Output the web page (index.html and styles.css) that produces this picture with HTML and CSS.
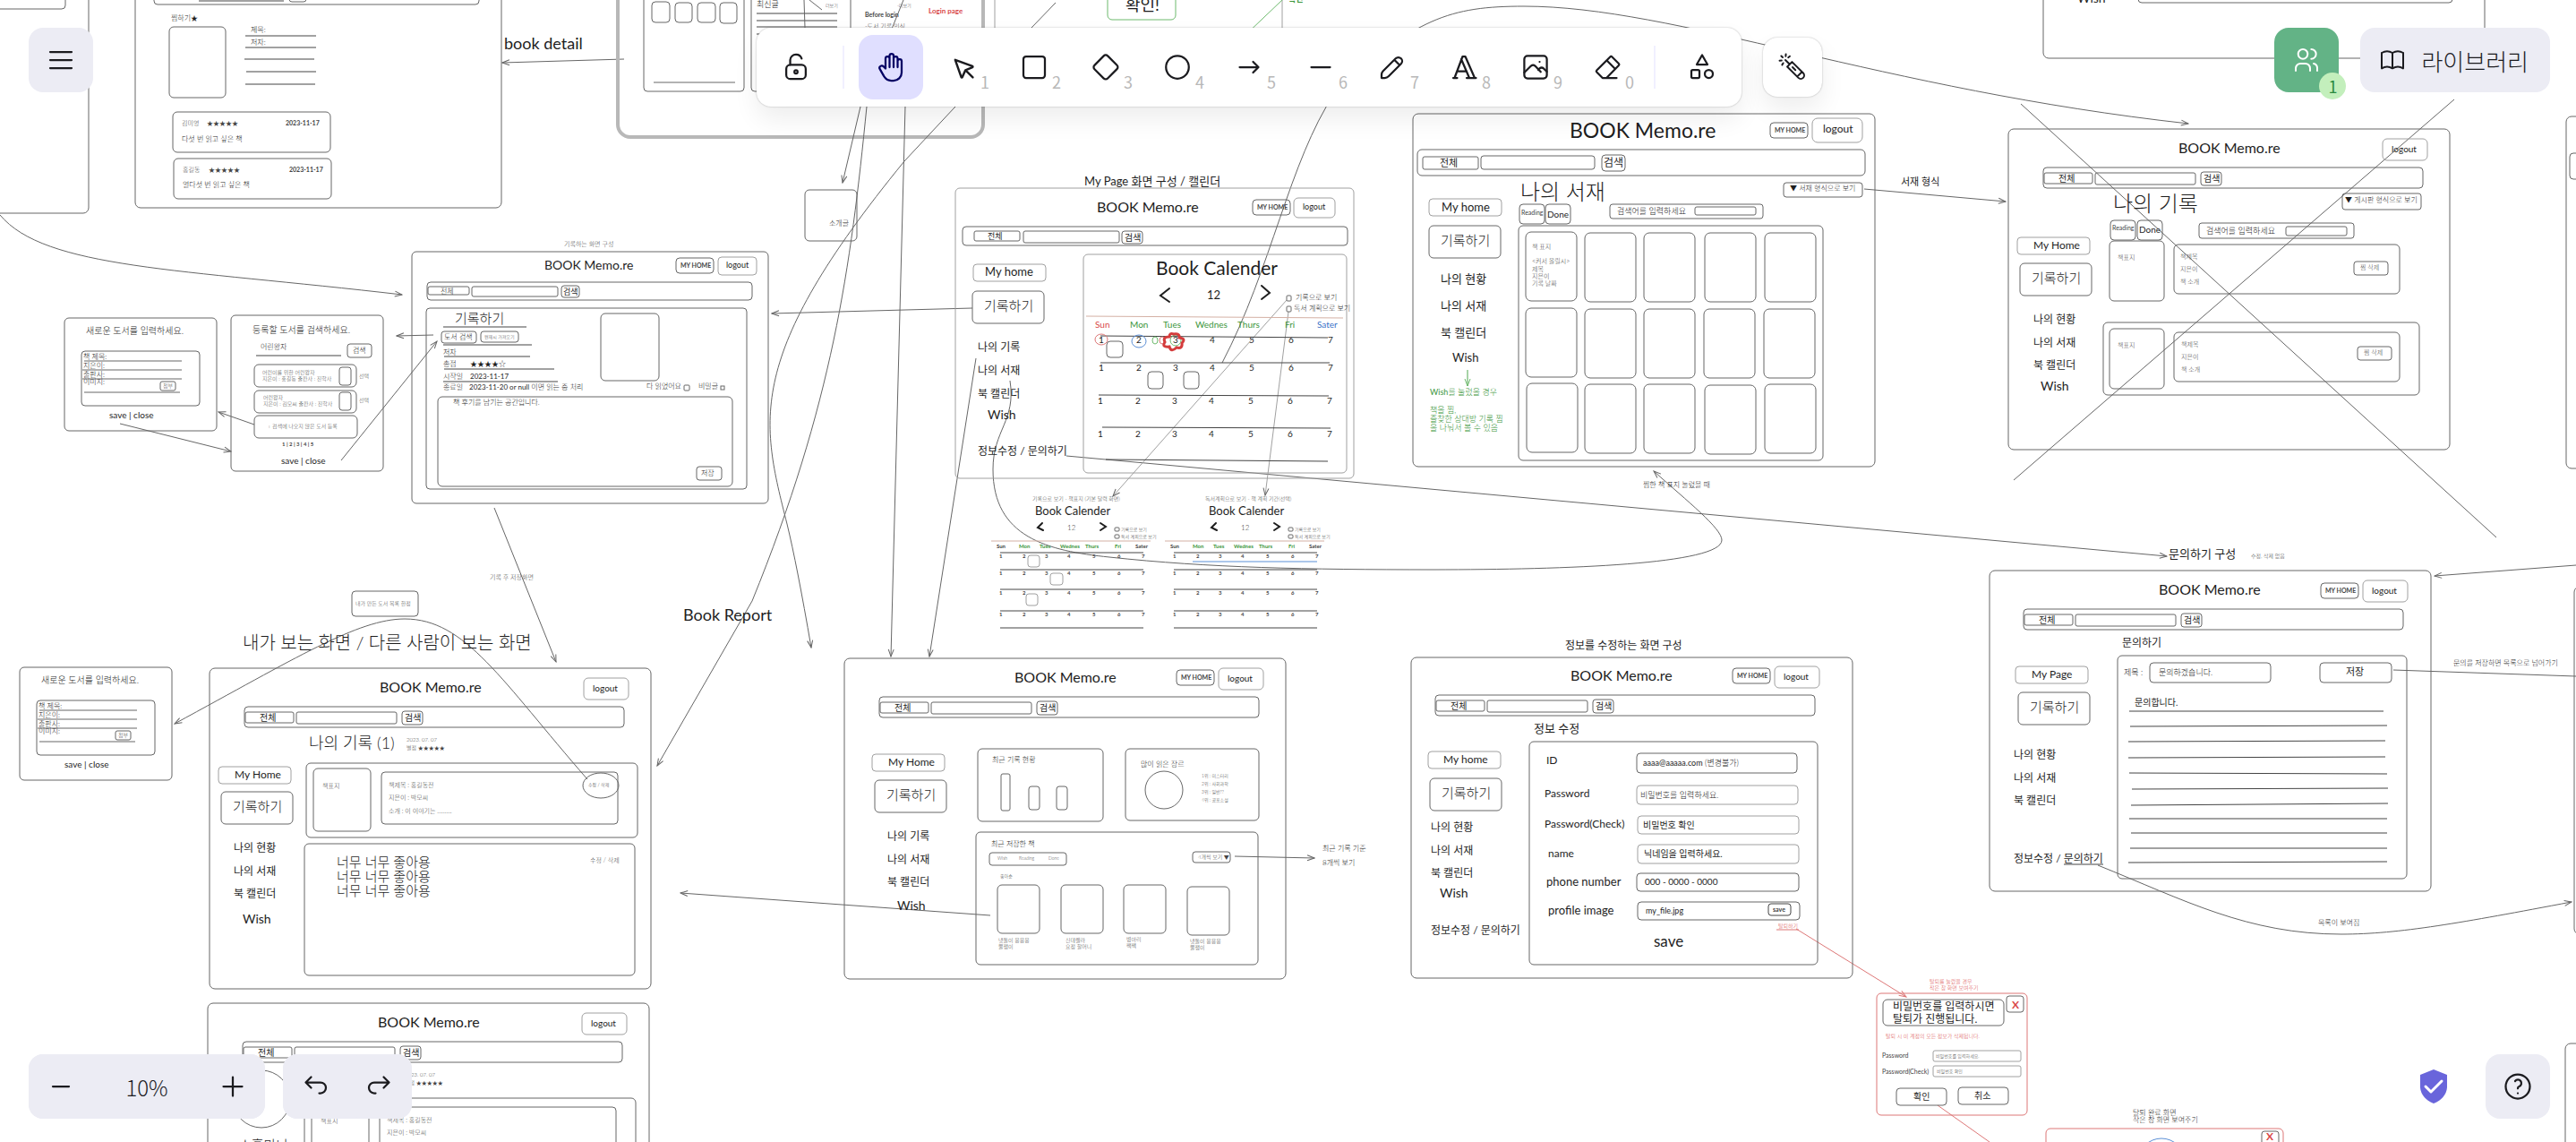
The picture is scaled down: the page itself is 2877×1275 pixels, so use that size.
FILE: index.html
```html
<!DOCTYPE html>
<html lang="ko">
<head>
<meta charset="utf-8">
<title>BOOK Memo.re</title>
<link rel="stylesheet" href="styles.css">
</head>
<body>
<svg class="canvas" aria-label="BOOK Memo.re wireframe">
  <defs>
    <marker id="tip" class="tip" viewBox="0 0 10 8" markerWidth="10" markerHeight="8" refX="9" refY="4" orient="auto" markerUnits="userSpaceOnUse"><path d="M1 1 9 4 1 7"/></marker>
    <marker id="tip-red" class="tip red" viewBox="0 0 10 8" markerWidth="10" markerHeight="8" refX="9" refY="4" orient="auto" markerUnits="userSpaceOnUse"><path d="M1 1 9 4 1 7"/></marker>
    <marker id="tip-green" class="tip green" viewBox="0 0 10 8" markerWidth="10" markerHeight="8" refX="9" refY="4" orient="auto" markerUnits="userSpaceOnUse"><path d="M1 1 9 4 1 7"/></marker>

    <!-- frame header: title, logout and search bar -->
    <g id="head">
      <text class="s16" x="190" y="27">BOOK Memo.re</text>
      <rect class="soft" x="418" y="11" width="50" height="24" rx="5"/><text class="s10" x="428" y="26">logout</text>
      <rect x="39" y="43" width="424" height="23" rx="4"/>
      <rect x="40" y="49" width="54" height="12" rx="2"/><text class="s10" x="56" y="59">전체</text>
      <rect x="97" y="49" width="112" height="13" rx="2"/>
      <rect x="215" y="48" width="23" height="15" rx="3"/><text class="s10" x="218" y="59">검색</text>
    </g>
    <g id="myhome"><rect width="42" height="17" rx="4"/><text class="s7 b" x="5" y="11">MY HOME</text></g>
    <g id="frame"><rect width="493" height="358" rx="6"/></g>
    <g id="write"><rect width="80" height="36" rx="5"/><text class="s15" x="13" y="22">기록하기</text></g>
    <g id="tab"><rect class="soft" width="81" height="19" rx="4"/></g>

    <!-- one saved record -->
    <g id="record">
      <use href="#frame"/><use href="#head"/>
      <text class="s6" x="220" y="82">2023. 07. 07</text>
      <text class="s6" x="220" y="91">별점 ★★★★★</text>
      <rect x="108" y="106" width="370" height="83" rx="5"/>
      <rect x="116" y="112" width="64" height="70" rx="5"/><text class="s7" x="126" y="134">책표지</text>
      <rect x="192" y="116" width="264" height="58" rx="4"/>
      <text class="s7" x="200" y="133">책제목 : 홍길동전</text>
      <text class="s7" x="200" y="147">지은이 : 박모씨</text>
      <text class="s7" x="200" y="162">소개 : 이 이야기는 ..........</text>
      <rect x="106" y="196" width="369" height="147" rx="5"/>
    </g>

    <!-- new book dialog -->
    <g id="newbook">
      <rect width="170" height="126" rx="5"/>
      <text class="s10 light" x="24" y="18">새로운 도서를 입력하세요.</text>
      <rect x="19" y="37" width="132" height="61" rx="4"/>
      <g class="s8"><text x="21" y="46">책 제목:</text><text x="21" y="56">지은이:</text><text x="21" y="66">출판사:</text><text x="21" y="74">이미지:</text></g>
      <path d="M22 48h109M20 58h111M20 68h111M22 83h107"/>
      <rect x="107" y="71" width="17" height="10" rx="2"/><text class="s6" x="110" y="78">첨부</text>
      <text class="s10" x="50" y="112">save | close</text>
    </g>

    <!-- small calendar -->
    <g id="minical">
      <text class="s13" x="49" y="23">Book Calender</text>
      <path class="bold" d="M57 32 52 37 58 40M122 32 128 36 122 40"/>
      <text class="s8" x="85" y="40">12</text>
      <rect x="138" y="37" width="5" height="4" rx="1"/><rect x="138" y="45" width="5" height="4" rx="1"/>
      <text class="s5" x="145" y="41">기록으로 보기</text><text class="s5" x="145" y="49">독서 계획으로 보기</text>
      <path class="brown" d="M0 52H178"/>
      <g class="s6 b">
        <text class="tr" x="6" y="60">Sun</text>
        <g class="tg"><text x="31" y="60">Mon</text><text x="54" y="60">Tues</text><text x="77" y="60">Wednes</text><text x="105" y="60">Thurs</text><text x="138" y="60">Fri</text></g>
        <text class="tb" x="161" y="60">Sater</text>
        <text y="71" x="9 35 60 85 113 141 168">1234567</text>
        <text y="90" x="9 35 60 85 113 141 168">1234567</text>
        <text y="112" x="9 35 60 85 113 141 168">1234567</text>
        <text y="136" x="9 35 60 85 113 141 168">1234567</text>
      </g>
      <path class="dark" d="M10 65H170M10 84H170M10 106H170M10 130H170M10 149H170"/>
    </g>
  </defs>

  <!-- top left frames -->
  <rect x="-50" y="-50" width="149" height="288" rx="6"/><rect x="-50" y="-50" width="123" height="60" rx="4"/>
  <rect x="151" y="-50" width="409" height="282" rx="6"/>
  <rect x="172" y="-20" width="363" height="25" rx="4"/><path class="dark" d="M222 1H317"/><rect x="323" y="-10" width="19" height="12" rx="3"/>
  <text class="s8" x="191" y="23">찜하기★</text>
  <rect x="189" y="30" width="63" height="79" rx="5"/>
  <text class="s8" x="280" y="36">제목:</text><text class="s8" x="280" y="50">저자:</text>
  <path class="dark" d="M274 40h79M274 53h79M273 66h78M275 80h78M274 94h78"/>
  <rect x="193" y="125" width="176" height="45" rx="5"/>
  <text class="s7" x="203" y="140">김미영</text><text class="s7" x="231" y="140">★★★★★</text><text class="s7 b" x="319" y="140">2023-11-17</text>
  <text class="s8" x="203" y="158">다섯 번 읽고 싶은 책</text>
  <rect x="194" y="177" width="176" height="45" rx="5"/>
  <text class="s7" x="204" y="192">홍길동</text><text class="s7" x="233" y="192">★★★★★</text><text class="s7 b" x="323" y="192">2023-11-17</text>
  <text class="s8" x="204" y="209">열다섯 번 읽고 싶은 책</text>
  <text class="s18" x="563" y="55">book detail</text>
  <path class="arrow" d="M697 66 561 70"/>

  <rect class="thick" x="690" y="-50" width="408" height="203" rx="14"/>
  <rect x="719" y="-20" width="112" height="122" rx="4"/>
  <rect x="728" y="2" width="20" height="23" rx="4"/><rect x="754" y="3" width="19" height="22" rx="4"/><rect x="779" y="3" width="20" height="22" rx="4"/><rect x="804" y="3" width="19" height="23" rx="4"/>
  <path d="M730 92H821"/>
  <rect x="839" y="-20" width="111" height="122" rx="4"/>
  <text class="s9 light" x="845" y="8">최신글</text>
  <path class="dark" d="M845 15h90M845 23h90M845 30h90M845 38h90"/>
  <path d="M898 0 899 31M904 0 918 11"/><text class="s5" x="922" y="8">더보기</text>
  <text class="s5" x="1002" y="8">-더보기</text><text class="s7 b" x="966" y="19">Before login</text><text class="s7" x="966" y="32">-도서 기록 인식</text>
  <text class="s8 b tr" x="1037" y="15">Login page</text>
  <path class="soft" d="M1111 0V40M1432 0V40"/>
  <rect class="green" x="1237" y="-10" width="76" height="32" rx="5"/><text class="s18" x="1257" y="12">확인!</text>
  <path class="green" d="M1432 0 1390 40"/><text class="s9 b tg" x="1439" y="2">확인</text>
  <rect x="2282" y="-20" width="493" height="85" rx="6"/><rect x="2388" y="-20" width="351" height="23" rx="4"/><text class="s14" x="2320" y="3">Wish</text>

  <!-- connectors -->
  <path class="arrow" d="M0 240C50 300 200 300 449 329"/>
  <path class="arrow" d="M1009 0 961 119 941 204"/>
  <path class="arrow" d="M968 119C950 300 930 450 840 671L734 855"/>
  <path class="arrow" d="M1012 80 995 733"/>
  <path class="arrow" d="M1179 3 1067 119 1010 180C830 400 850 470 879 585Q890 630 906 723"/>
  <path class="arrow" d="M1365 405C1420 300 1440 180 1490 105C1580 20 1620 7 1702 7C1870 7 2100 100 2444 138"/>
  <path class="arrow" d="M1086 344 862 350"/>
  <path class="arrow" d="M1090 400 1038 733"/>
  <path class="arrow" d="M1191 509 2420 621"/>
  <path class="arrow" d="M1128 425C1135 470 1109 480 1109 524C1109 600 1170 615 1239 622C1350 634 1460 636 1600 636C1750 636 1923 630 1923 603C1923 590 1885 560 1847 526"/>
  <path class="arrow soft" d="M1437 335 1243 554"/><path class="arrow soft" d="M1439 348 1413 553"/>
  <path class="arrow" d="M2082 211 2240 225"/>
  <path d="M2257 116 2788 600M2741 111 2249 536"/>
  <path class="arrow" d="M284 474 244 460"/><path class="arrow" d="M134 473 258 504"/><path class="arrow" d="M381 514 488 381"/><path class="arrow" d="M484 374 443 375"/>
  <path class="arrow" d="M552 567 621 739"/>
  <path class="arrow" d="M656 870C560 760 520 691 452 691C400 691 330 735 195 808"/>
  <path class="arrow" d="M1106 1022 760 997"/><path class="arrow" d="M1379 956 1468 958"/>
  <path class="arrow" d="M2877 631 2719 643"/><path d="M2673 748 2877 755"/>
  <path class="arrow" d="M2343 966C2440 1005 2510 1043 2615 1043C2680 1043 2750 1030 2872 1007"/>
  <path class="arrow red" d="M2006 1037 2129 1113"/><path class="red soft" d="M2164 1234 2222 1275"/>
  <rect x="899" y="212" width="58" height="57" rx="5"/><text class="s8" x="926" y="252">소개글</text>

  <!-- record entry frame -->
  <text class="s7" x="630" y="275">기록하는 화면 구성</text>
  <rect x="460" y="281" width="398" height="281" rx="5"/>
  <text class="s14" x="608" y="301">BOOK Memo.re</text>
  <use href="#myhome" x="755" y="288"/>
  <rect class="soft" x="802" y="287" width="43" height="20" rx="4"/><text class="s9" x="811" y="299">logout</text>
  <rect x="477" y="315" width="363" height="20" rx="4"/><rect x="478" y="320" width="46" height="9" rx="2"/><text class="s8" x="492" y="328">전체</text>
  <rect x="527" y="320" width="96" height="11" rx="2"/><rect x="627" y="319" width="20" height="13" rx="3"/><text class="s9" x="629" y="329">검색</text>
  <rect x="476" y="344" width="358" height="202" rx="4"/>
  <text class="s15" x="508" y="361">기록하기</text>
  <path class="dark" d="M495 365h93M495 385h99M496 398h96M496 412h123M495 426h128"/>
  <rect x="493" y="370" width="39" height="13" rx="3"/><text class="s8" x="496" y="379">도서 검색</text>
  <rect x="537" y="370" width="42" height="12" rx="3"/><text class="s5" x="541" y="378">현재시 가져오기</text>
  <g class="s8">
    <text x="495" y="396">저자</text><text x="495" y="409">총점</text><text x="525" y="409">★★★★☆</text>
    <text x="495" y="423">시작일</text><text class="m" x="525" y="423">2023-11-17</text>
    <text x="495" y="435">종료일</text><text x="524" y="435"><tspan class="m">2023-11-20 or null</tspan> 이면 읽는 중 처리</text>
    <text x="722" y="434">다 읽었어요</text><text x="780" y="434">비밀글</text>
    <text x="506" y="452">책 후기를 남기는 공간입니다.</text>
  </g>
  <rect x="764" y="430" width="6" height="6" rx="1"/><rect x="805" y="431" width="4" height="4"/>
  <rect x="671" y="350" width="65" height="75" rx="5"/>
  <rect x="489" y="443" width="329" height="100" rx="5"/>
  <rect x="778" y="521" width="28" height="15" rx="3"/><text class="s8" x="783" y="531">저장</text>

  <!-- dialogs left -->
  <use href="#newbook" x="72" y="355"/><use href="#newbook" x="22" y="745"/>
  <rect x="258" y="352" width="170" height="174" rx="5"/>
  <text class="s10 light" x="282" y="372">등록할 도서를 검색하세요.</text>
  <text class="s8" x="291" y="390">어린왕자</text><path class="dark" d="M286 397h95"/>
  <rect x="388" y="384" width="27" height="15" rx="3"/><text class="s8" x="394" y="394">검색</text>
  <rect x="284" y="407" width="114" height="25" rx="5"/><rect x="379" y="410" width="13" height="20" rx="3"/>
  <rect x="284" y="436" width="114" height="25" rx="5"/><rect x="379" y="438" width="13" height="20" rx="3"/>
  <rect x="284" y="464" width="115" height="25" rx="5"/>
  <g class="s6"><text x="293" y="418">어린이를 위한 어린왕자</text><text x="293" y="425">지은이 : 홍길동 출판사 : 진학사</text><text x="401" y="422">선택</text>
  <text x="294" y="446">어린왕자</text><text x="294" y="453">지은이 : 김모씨 출판사 : 진학사</text><text x="401" y="449">선택</text>
  <text x="299" y="478">+ 검색에 나오지 않은 도서 등록</text><text class="b" x="315" y="498">1 | 2 | 3 | 4 | 5</text></g>
  <text class="s10" x="314" y="518">save | close</text>

  <!-- calendar frame -->
  <text class="s13" x="1211" y="207">My Page 화면 구성 / 캘린더</text>
  <rect class="soft" x="1067" y="210" width="445" height="324" rx="5"/>
  <text class="s16" x="1225" y="237">BOOK Memo.re</text>
  <use href="#myhome" x="1399" y="223"/>
  <rect class="soft" x="1445" y="221" width="46" height="22" rx="5"/><text class="s9" x="1455" y="234">logout</text>
  <rect x="1075" y="253" width="430" height="21" rx="4"/><rect x="1088" y="258" width="51" height="11" rx="2"/><text class="s9" x="1103" y="267">전체</text>
  <rect x="1143" y="258" width="107" height="13" rx="2"/><rect x="1253" y="258" width="23" height="14" rx="3"/><text class="s10" x="1256" y="269">검색</text>
  <use href="#tab" x="1087" y="295"/><text class="s13" x="1100" y="308">My home</text>
  <use href="#write" x="1086" y="325"/>
  <g class="s12"><text x="1092" y="392">나의 기록</text><text x="1092" y="418">나의 서재</text><text x="1092" y="444">북 캘린더</text><text x="1092" y="508">정보수정 / 문의하기</text></g><text class="s14" x="1103" y="468">Wish</text>
  <rect class="soft" x="1210" y="284" width="294" height="244" rx="5"/>
  <text class="s21" x="1291" y="307">Book Calender</text>
  <path class="bold" d="M1306 322 1296 330 1306 337M1409 319 1418 327 1409 334"/><text class="s13" x="1348" y="334">12</text>
  <rect x="1437" y="330" width="5" height="6" rx="1"/><rect x="1437" y="342" width="5" height="6" rx="1"/>
  <text class="s8" x="1447" y="335">기록으로 보기</text><text class="s8" x="1445" y="347">독서 계획으로 보기</text>
  <path class="brown" d="M1213 353 1500 355"/>
  <g class="s10">
    <text class="tr" x="1223" y="366">Sun</text>
    <g class="tg"><text x="1262" y="366">Mon</text><text x="1299" y="366">Tues</text><text x="1335" y="366">Wednes</text><text x="1382" y="366">Thurs</text><text x="1435" y="366">Fri</text></g>
    <text class="tb" x="1471" y="366">Sater</text>
    <text y="383" x="1227 1269 1310 1351 1395 1439 1483">1234567</text>
    <text y="414" x="1227 1269 1310 1351 1395 1439 1483">1234567</text>
    <text y="451" x="1226 1268 1309 1350 1394 1438 1482">1234567</text>
    <text y="488" x="1226 1268 1309 1350 1394 1438 1482">1234567</text>
  </g>
  <path class="dark" d="M1229 375 1483 377M1229 405 1485 405M1227 441 1484 442M1231 477 1486 478M1235 513 1483 515"/>
  <rect x="1236" y="381" width="18" height="18" rx="4"/><rect x="1282" y="415" width="17" height="19" rx="4"/><rect x="1322" y="415" width="17" height="19" rx="4"/>
  <ellipse class="red" cx="1230" cy="379" rx="7" ry="6"/><ellipse class="blue" cx="1272" cy="381" rx="8" ry="7"/>
  <ellipse class="green" cx="1290" cy="380" rx="3" ry="4"/><ellipse class="red" cx="1298" cy="380" rx="3" ry="4"/><ellipse class="green" cx="1313" cy="380" rx="6" ry="6"/>
  <path class="flower" d="M1306 376Q1306 371 1311 373Q1318 372 1317 377Q1325 378 1320 383Q1321 390 1314 388Q1308 394 1306 387Q1297 388 1301 382Q1298 376 1306 376Z"/>

  <!-- small calendars -->
  <text class="s6" x="1153" y="559">기록으로 보기 - 책표지 (기본 달력 화면)</text><text class="s6" x="1346" y="559">독서계획으로 보기 - 책 계획 기간(선택)</text>
  <use href="#minical" x="1107" y="552"/><use href="#minical" x="1301" y="552"/>
  <path class="blue" d="M1332 627H1471"/>
  <g class="soft"><rect x="1148" y="620" width="13" height="13" rx="3"/><rect x="1173" y="640" width="14" height="13" rx="3"/><rect x="1146" y="663" width="13" height="13" rx="3"/></g>

  <!-- library frame -->
  <rect x="1578" y="127" width="516" height="394" rx="6"/>
  <text class="s23" x="1753" y="154">BOOK Memo.re</text>
  <use href="#myhome" x="1977" y="137"/>
  <rect class="soft" x="2024" y="132" width="56" height="27" rx="6"/><text class="s12" x="2036" y="148">logout</text>
  <rect x="1583" y="167" width="500" height="29" rx="5"/><rect x="1589" y="175" width="62" height="14" rx="2"/><text class="s11" x="1608" y="186">전체</text>
  <rect x="1654" y="174" width="127" height="15" rx="3"/><rect x="1789" y="173" width="26" height="18" rx="4"/><text class="s12" x="1791" y="186">검색</text>
  <text class="s24" x="1698" y="223">나의 서재</text>
  <rect x="1992" y="204" width="88" height="16" rx="3"/><text class="s8" x="1999" y="213">▼ 서재 형식으로 보기</text>
  <rect x="1697" y="228" width="28" height="22" rx="4"/><text class="s7 m" x="1699" y="240">Reading</text><rect x="1726" y="228" width="28" height="22" rx="4"/><text class="s10" x="1728" y="243">Done</text>
  <rect x="1798" y="228" width="171" height="16" rx="3"/><text class="s9 light" x="1806" y="239">검색어를 입력하세요</text><rect x="1893" y="231" width="68" height="9" rx="2"/>
  <rect x="1696" y="252" width="340" height="262" rx="5"/>
  <g>
    <rect x="1704" y="259" width="57" height="77" rx="6"/><rect x="1770" y="260" width="57" height="77" rx="6"/><rect x="1836" y="260" width="57" height="77" rx="6"/><rect x="1904" y="260" width="57" height="77" rx="6"/><rect x="1971" y="260" width="57" height="77" rx="6"/>
    <rect x="1704" y="344" width="57" height="77" rx="6"/><rect x="1770" y="345" width="57" height="77" rx="6"/><rect x="1836" y="345" width="57" height="77" rx="6"/><rect x="1903" y="345" width="57" height="77" rx="6"/><rect x="1970" y="345" width="57" height="77" rx="6"/>
    <rect x="1705" y="428" width="57" height="77" rx="6"/><rect x="1770" y="429" width="57" height="77" rx="6"/><rect x="1836" y="429" width="57" height="77" rx="6"/><rect x="1904" y="430" width="57" height="77" rx="6"/><rect x="1971" y="429" width="57" height="77" rx="6"/>
  </g>
  <g class="s7"><text x="1711" y="278">책 표지</text><text x="1711" y="294">&lt;커서 올릴시&gt;</text><text x="1711" y="303">제목</text><text x="1711" y="311">지은이</text><text x="1711" y="319">기록 날짜</text></g>
  <use href="#tab" x="1596" y="222"/><text class="s13" x="1610" y="236">My home</text>
  <use href="#write" x="1596" y="252"/>
  <g class="s13"><text x="1609" y="316">나의 현황</text><text x="1609" y="346">나의 서재</text><text x="1609" y="376">북 캘린더</text><text x="1622" y="404">Wish</text></g>
  <path class="arrow-green" d="M1639 413V431"/>
  <g class="s9 tg"><text class="light" x="1597" y="441"><tspan class="m">Wish</tspan>를 눌렀을 경우</text><text class="light" x="1597" y="461">책을 찜,</text><text class="light" x="1597" y="471">즐찾한 상대방 기록 찜</text><text class="light" x="1597" y="481">을 나눠서 볼 수 있음</text></g>
  <text class="s8" x="1835" y="544">찜한 책 표지 눌렀을 때</text>
  <text class="s11" x="2123" y="207">서재 형식</text>

  <!-- crossed-out list frame -->
  <use href="#frame" x="2243" y="144"/><use href="#head" x="2243" y="144"/>
  <text class="s24" x="2360" y="236">나의 기록</text>
  <rect x="2616" y="216" width="88" height="18" rx="3"/><text class="s8" x="2619" y="226">▼ 게시판 형식으로 보기</text>
  <rect x="2357" y="246" width="28" height="22" rx="4"/><text class="s7 m" x="2359" y="257">Reading</text><rect x="2387" y="246" width="28" height="22" rx="4"/><text class="s10" x="2389" y="260">Done</text>
  <rect x="2456" y="249" width="173" height="17" rx="3"/><text class="s9 light" x="2464" y="261">검색어를 입력하세요</text><rect x="2553" y="253" width="68" height="10" rx="2"/>
  <rect x="2356" y="269" width="61" height="67" rx="5"/><rect x="2428" y="273" width="252" height="55" rx="5"/><rect x="2629" y="292" width="38" height="15" rx="3"/>
  <rect x="2349" y="360" width="353" height="81" rx="5"/><rect x="2356" y="367" width="61" height="67" rx="5"/><rect x="2428" y="371" width="252" height="55" rx="5"/><rect x="2633" y="387" width="38" height="15" rx="3"/>
  <g class="s7"><text x="2365" y="290">책표지</text><text x="2435" y="289">책제목</text><text x="2435" y="303">지은이</text><text x="2435" y="317">책 소개</text><text x="2636" y="301">찜 삭제</text>
  <text x="2365" y="388">책표지</text><text x="2436" y="387">책제목</text><text x="2436" y="401">지은이</text><text x="2436" y="415">책 소개</text><text x="2640" y="396">찜 삭제</text></g>
  <use href="#tab" x="2253" y="265"/><text class="s12" x="2271" y="278">My Home</text><use href="#write" x="2256" y="294"/>
  <g class="s12"><text x="2271" y="361">나의 현황</text><text x="2271" y="387">나의 서재</text><text x="2271" y="412">북 캘린더</text></g><text class="s14" x="2279" y="436">Wish</text>

  <!-- inquiry frame -->
  <text class="s13" x="2422" y="623">문의하기 구성</text><text class="s6" x="2514" y="623">수정, 삭제 없음</text>
  <use href="#frame" x="2222" y="637"/><use href="#head" x="2221" y="637"/><use href="#myhome" x="2592" y="651"/>
  <text class="s12" x="2370" y="722">문의하기</text>
  <rect x="2365" y="732" width="323" height="249" rx="5"/>
  <text class="s9 light" x="2372" y="754">제목 :</text><rect x="2401" y="740" width="135" height="22" rx="4"/><text class="s9 light" x="2411" y="754">문의하겠습니다.</text>
  <rect x="2591" y="740" width="80" height="22" rx="4"/><text class="s11" x="2620" y="754">저장</text>
  <text class="s10" x="2384" y="788">문의합니다.</text>
  <path class="dark" d="M2378 794H2662M2379 811 2666 810M2377 828 2664 827M2377 846 2664 845M2378 863 2666 864M2381 881 2667 880M2380 899 2667 897M2378 914H2666M2380 930H2666M2379 947H2666M2377 963 2666 962"/>
  <use href="#tab" x="2251" y="744"/><text class="s12" x="2269" y="757">My Page</text><use href="#write" x="2254" y="773"/>
  <g class="s12"><text x="2249" y="847">나의 현황</text><text x="2249" y="873">나의 서재</text><text x="2249" y="898">북 캘린더</text><text x="2249" y="963">정보수정 / 문의하기</text></g>
  <path class="dark" d="M2305 965H2349"/>
  <text class="s8" x="2589" y="1033">목록이 보여짐</text><text class="s8" x="2740" y="743">문의를 저장하면 목록으로 넘어가기</text>
  <rect x="2866" y="130" width="60" height="393" rx="6"/><rect x="2870" y="171" width="60" height="29" rx="4"/><rect x="2875" y="655" width="60" height="388" rx="6"/><rect x="2865" y="1165" width="60" height="200" rx="6"/>

  <!-- dashboard frame -->
  <text class="s18" x="763" y="693">Book Report</text>
  <use href="#frame" x="943" y="735"/><use href="#head" x="943" y="735"/><use href="#myhome" x="1314" y="748"/>
  <use href="#tab" x="974" y="842"/><text class="s12" x="992" y="855">My Home</text><use href="#write" x="977" y="871"/>
  <g class="s12"><text x="991" y="938">나의 기록</text><text x="991" y="964">나의 서재</text><text x="991" y="989">북 캘린더</text></g><text class="s14" x="1002" y="1016">Wish</text>
  <rect x="1092" y="836" width="140" height="81" rx="5"/><rect x="1257" y="836" width="149" height="80" rx="5"/><rect x="1090" y="929" width="315" height="148" rx="5"/>
  <rect x="1118" y="864" width="10" height="41" rx="2"/><rect x="1149" y="878" width="12" height="26" rx="3"/><rect x="1180" y="878" width="12" height="26" rx="3"/><circle cx="1300" cy="882" r="21"/>
  <g class="s8"><text x="1108" y="851">최근 기록 현황</text><text x="1274" y="856">많이 읽은 장르</text><text x="1107" y="945">최근 저장한 책</text><text x="1477" y="950">최근 기록 기준</text><text x="1477" y="966">8개씩 보기</text></g>
  <g class="s5"><text x="1342" y="868">1위 : 미스터리</text><text x="1342" y="877">2위 : 사회과학</text><text x="1342" y="886">3위 : 일반??</text><text x="1342" y="895">4위 : 공포소설</text><text x="1114" y="960">Wish</text><text x="1138" y="960">Reading</text><text x="1171" y="960">Done</text><text x="1117" y="980">좋아순</text></g>
  <rect x="1105" y="952" width="86" height="14" rx="3"/><rect x="1332" y="951" width="42" height="12" rx="3"/><text class="s6" x="1338" y="959">4개씩 보기 ▼</text>
  <rect x="1114" y="988" width="47" height="54" rx="5"/><rect x="1185" y="988" width="47" height="54" rx="5"/><rect x="1255" y="988" width="47" height="54" rx="5"/><rect x="1326" y="990" width="47" height="54" rx="5"/>
  <g class="s6"><text x="1115" y="1052">냇돌이 용용용</text><text x="1115" y="1059">뿔쟁이</text><text x="1190" y="1052">신데렐라</text><text x="1190" y="1059">요정 할머니</text><text x="1258" y="1051">병아리</text><text x="1258" y="1058">짹짹</text><text x="1329" y="1053">냇돌이 용용용</text><text x="1329" y="1060">뿔쟁이</text></g>

  <!-- profile edit frame -->
  <text class="s12" x="1748" y="725">정보를 수정하는 화면 구성</text>
  <use href="#frame" x="1576" y="734"/><use href="#head" x="1564" y="733"/><use href="#myhome" x="1935" y="746"/>
  <text class="s13" x="1713" y="818">정보 수정</text>
  <rect x="1708" y="828" width="322" height="249" rx="5"/>
  <g class="s12"><text x="1727" y="853">ID</text><text x="1725" y="890">Password</text><text x="1725" y="924">Password(Check)</text><text x="1729" y="957">name</text></g><g class="s13"><text x="1727" y="989">phone number</text><text x="1729" y="1021">profile image</text></g>
  <rect x="1828" y="841" width="179" height="22" rx="4"/><rect class="soft" x="1828" y="877" width="180" height="21" rx="4"/><rect class="soft" x="1829" y="911" width="180" height="20" rx="4"/><rect class="soft" x="1829" y="943" width="180" height="21" rx="4"/><rect x="1828" y="975" width="181" height="20" rx="4"/><rect x="1829" y="1007" width="181" height="20" rx="4"/>
  <text class="s9 light" x="1835" y="855"><tspan class="m">aaaa@aaaaa.com</tspan> (변경불가)</text><text class="s9 light" x="1832" y="891">비밀번호를 입력하세요.</text><text class="s10" x="1835" y="925">비밀번호 확인</text><text class="s10" x="1836" y="957">닉네임을 입력하세요.</text><text class="s10" x="1837" y="988">000 - 0000 - 0000</text><text class="s9" x="1838" y="1020">my_file.jpg</text>
  <rect class="dark" x="1975" y="1009" width="25" height="13" rx="3"/><text class="s7 b" x="1980" y="1018">save</text><text class="s17" x="1847" y="1057">save</text>
  <text class="s6 tr" x="1986" y="1036">탈퇴하기</text><path class="red" d="M1984 1038H2009"/>
  <use href="#tab" x="1595" y="839"/><text class="s12" x="1612" y="852">My home</text><use href="#write" x="1597" y="869"/>
  <g class="s12"><text x="1598" y="928">나의 현황</text><text x="1598" y="954">나의 서재</text><text x="1598" y="979">북 캘린더</text><text x="1598" y="1043">정보수정 / 문의하기</text></g><text class="s14" x="1608" y="1002">Wish</text>

  <!-- leave-account dialogs -->
  <text class="s6 tr" x="2155" y="1098">탈퇴를 눌렀을 경우</text><text class="s6 tr" x="2155" y="1105">작은 창 화면 보여주기</text>
  <rect class="red" x="2096" y="1109" width="168" height="136" rx="5"/>
  <rect x="2103" y="1116" width="135" height="29" rx="5"/><text class="s12" x="2114" y="1128">비밀번호를 입력하시면</text><text class="s12" x="2114" y="1142">탈퇴가 진행됩니다.</text>
  <rect x="2241" y="1112" width="19" height="18" rx="3"/><text class="s12 b tr" x="2247" y="1126">X</text>
  <text class="s6 tr" x="2106" y="1159">탈퇴 시 이 계정의 모든 정보가 삭제됩니다.</text>
  <text class="s7 m" x="2102" y="1181">Password</text><text class="s7 m" x="2102" y="1199">Password(Check)</text>
  <rect class="soft" x="2159" y="1173" width="98" height="12" rx="2"/><rect class="soft" x="2159" y="1190" width="98" height="12" rx="2"/><text class="s5" x="2162" y="1181">비밀번호를 입력하세요.</text><text class="s5" x="2163" y="1198">비밀번호 확인</text>
  <rect x="2118" y="1215" width="56" height="19" rx="4"/><text class="s10" x="2137" y="1228">확인</text><rect x="2187" y="1214" width="56" height="19" rx="4"/><text class="s10" x="2205" y="1227">취소</text>
  <text class="s8" x="2382" y="1245">탈퇴 완료 화면</text><text class="s8" x="2382" y="1253">작은 창 화면 보여주기</text>
  <rect class="red" x="2285" y="1260" width="265" height="100" rx="5"/><rect x="2526" y="1263" width="19" height="20" rx="3"/><text class="s12 b tr" x="2531" y="1273">X</text><circle class="blue" cx="2414" cy="1297" r="26"/>

  <!-- my record frames -->
  <text class="s7" x="547" y="647">기록 후 저장화면</text>
  <rect x="393" y="660" width="74" height="28" rx="4"/><text class="s6" x="397" y="676">내가 만든 도서 목록 한정</text>
  <text class="s20 light" x="271" y="725">내가 보는 화면 / 다른 사람이 보는 화면</text>
  <use href="#record" x="234" y="746"/><use href="#record" x="232" y="1120"/>
  <text class="s18 light" x="345" y="836">나의 기록 (1)</text>
  <use href="#tab" x="244" y="856"/><text class="s12" x="262" y="869">My Home</text><use href="#write" x="247" y="884"/>
  <g class="s12"><text x="261" y="951">나의 현황</text><text x="261" y="977">나의 서재</text><text x="261" y="1002">북 캘린더</text></g><text class="s14" x="271" y="1031">Wish</text>
  <ellipse cx="671" cy="877" rx="20" ry="14"/><text class="s5" x="657" y="878">수정 / 삭제</text><text class="s7" x="659" y="963">수정 / 삭제</text>
  <g class="s15"><text x="376" y="968">너무 너무 좋아용</text><text x="376" y="984">너무 너무 좋아용</text><text x="376" y="1000">너무 너무 좋아용</text></g>
  <circle cx="292" cy="1227" r="32"/><text class="s15" x="267" y="1284">소홍만나</text>
</svg>

<div class="ui">
  <header class="top">
    <div><button class="btn" aria-label="menu"><svg class="icon" viewBox="0 0 24 24"><path d="M4 6h16M4 12h16M4 18h16"/></svg></button></div>
    <div class="center">
      <div class="toolbar" role="toolbar" aria-label="tools">
        <button class="tool" aria-label="lock"><svg class="icon" viewBox="0 0 20 20"><path d="M13.542 8.542H6.458a2.500 2.500 0 0 0-2.500 2.500v3.750a2.500 2.500 0 0 0 2.500 2.500h7.084a2.500 2.500 0 0 0 2.500-2.500v-3.750a2.500 2.500 0 0 0-2.500-2.500Z"/><circle cx="10" cy="12.900" r="1"/><path d="M6.400 8.500V5.600C6.400 3.700 8 2.200 10 2.200c1.700 0 3 1 3.500 2.500"/></svg></button>
        <span class="sep"></span>
        <button class="tool on" aria-label="hand"><svg class="icon" viewBox="0 0 24 24"><path d="M8 13V5.500a1.500 1.500 0 0 1 3 0V12M11 5.500v-2a1.500 1.500 0 1 1 3 0V12M14 5.500a1.500 1.500 0 0 1 3 0V12M17 7.500a1.500 1.500 0 0 1 3 0V16a6 6 0 0 1-6 6h-2 .208a6 6 0 0 1-5.012-2.700A69.740 69.740 0 0 1 7 19c-.312-.479-1.407-2.388-3.286-5.728a1.500 1.500 0 0 1 .536-2.022 1.867 1.867 0 0 1 2.280.280L8 13"/></svg></button>
        <button class="tool" aria-label="select"><svg class="icon" viewBox="0 0 22 22"><path d="m6 6 4.153 11.793a.365.365 0 0 0 .331.207.366.366 0 0 0 .332-.207L13 13l4.787-1.994a.355.355 0 0 0 .213-.323.355.355 0 0 0-.213-.323ZM13.500 13.500 18 18"/></svg><span>1</span></button>
        <button class="tool" aria-label="rectangle"><svg class="icon" viewBox="0 0 24 24"><rect x="4" y="4" width="16" height="16" rx="2"/></svg><span>2</span></button>
        <button class="tool" aria-label="diamond"><svg class="icon" viewBox="0 0 24 24"><path d="M10.500 20.400 3.600 13.500a2 2 0 0 1 0-2.900L10.500 3.600a2 2 0 0 1 2.900 0l6.900 6.900a2 2 0 0 1 0 2.900l-6.900 6.900a2 2 0 0 1-2.900 0Z"/></svg><span>3</span></button>
        <button class="tool" aria-label="ellipse"><svg class="icon" viewBox="0 0 24 24"><circle cx="12" cy="12" r="8.500"/></svg><span>4</span></button>
        <button class="tool" aria-label="arrow"><svg class="icon" viewBox="0 0 24 24"><path d="M5 12h14M15 16l4-4M15 8l4 4"/></svg><span>5</span></button>
        <button class="tool" aria-label="line"><svg class="icon" viewBox="0 0 24 24"><path d="M5 12h14"/></svg><span>6</span></button>
        <button class="tool" aria-label="draw"><svg class="icon" viewBox="0 0 20 20"><path d="m7.643 15.690 7.774-7.773a2.357 2.357 0 1 0-3.334-3.334L4.310 12.357a3.333 3.333 0 0 0-.977 2.357v1.953h1.953c.884 0 1.732-.352 2.357-.977ZM11.250 5.417l3.333 3.333"/></svg><span>7</span></button>
        <button class="tool" aria-label="text"><svg class="icon" viewBox="0 0 24 24"><path d="M4 20h3M14 20h7M7 15h7M10 6l6 14M5 20 11 4h2l7 16"/></svg><span>8</span></button>
        <button class="tool" aria-label="image"><svg class="icon" viewBox="0 0 20 20"><rect x="3" y="3" width="14" height="14" rx="2"/><path d="M12.500 6.700h.010M3 13.300l4.200-4.100c.800-.700 1.700-.700 2.500 0l3.500 3.700M11.700 11.700l.800-.900c.800-.700 1.700-.700 2.500 0l2 2"/></svg><span>9</span></button>
        <button class="tool" aria-label="eraser"><svg class="icon" viewBox="0 0 24 24"><path d="M19 20H8.500L4.200 15.700a1 1 0 0 1 0-1.400l10-10a1 1 0 0 1 1.400 0l5 5a1 1 0 0 1 0 1.400L11.500 20M18 13.300 11.700 7"/></svg><span>0</span></button>
        <span class="sep"></span>
        <button class="tool" aria-label="more shapes"><svg class="icon" viewBox="0 0 24 24"><path d="m12 3-4 7h8Z"/><circle cx="17" cy="17" r="3"/><rect x="4" y="14" width="6" height="6" rx="1"/></svg></button>
      </div>
      <button class="laser" aria-label="laser pointer"><svg class="icon small" viewBox="0 0 20 20"><g transform="rotate(90 10 10)"><path d="m9.644 13.690 7.774-7.773a2.357 2.357 0 0 0-3.334-3.334l-7.773 7.774L8 12l1.643 1.690ZM13.250 3.417l3.333 3.333M10 10l2-2M5 15l3-3M2.156 17.894l1-1M5.453 19.029l-.144-1.407M2.377 11.887l.866 1.118M8.354 17.273l-1.194-.758M.953 14.652l1.408.130"/></g></svg></button>
    </div>
    <div class="right">
      <button class="btn share" aria-label="collaborate"><svg class="icon small" viewBox="0 0 24 24"><circle cx="9" cy="7" r="4"/><path d="M3 21v-2a4 4 0 0 1 4-4h4a4 4 0 0 1 4 4v2M16 3a4 4 0 0 1 0 8M21 21v-2a4 4 0 0 0-3-4"/></svg><span class="badge">1</span></button>
      <button class="btn library"><svg class="icon" viewBox="0 0 24 24"><path d="M3 19a9 9 0 0 1 9 0 9 9 0 0 1 9 0M3 6a9 9 0 0 1 9 0 9 9 0 0 1 9 0M3 6v13M12 6v13M21 6v13"/></svg>라이브러리</button>
    </div>
  </header>
  <footer class="bottom">
    <div class="group">
      <button class="btn" aria-label="zoom out"><svg class="icon" viewBox="0 0 24 24"><path d="M6 12h12"/></svg></button>
      <button class="percent">10%</button>
      <button class="btn" aria-label="zoom in"><svg class="icon" viewBox="0 0 24 24"><path d="M5 12h14M12 5v14"/></svg></button>
    </div>
    <div class="group">
      <button class="btn" aria-label="undo"><svg class="icon" viewBox="0 0 20 20"><path d="M7.500 10.833 4.167 7.500 7.500 4.167M4.167 7.500h9.166a3.333 3.333 0 0 1 0 6.667H12.500"/></svg></button>
      <button class="btn" aria-label="redo"><svg class="icon" viewBox="0 0 20 20"><path d="M12.500 10.833 15.833 7.500 12.500 4.167M15.833 7.500H6.667a3.333 3.333 0 1 0 0 6.667H7.500"/></svg></button>
    </div>
    <a class="shield" href="#security" aria-label="security"><svg viewBox="0 0 32 38"><path fill="#6965db" d="M16 0 31 6V20Q30 32 16 38Q2 32 1 20V6Z"/><path fill="none" stroke="#fff" stroke-width="3" stroke-linecap="round" stroke-linejoin="round" d="M7 19 13 25 25 13"/></svg></a>
    <button class="btn" aria-label="help"><svg class="icon" viewBox="0 0 24 24"><circle cx="12" cy="12" r="9"/><path d="M12 17v.010M12 13.500a1.500 1.500 0 0 1 1-1.500 2.600 2.600 0 1 0-3-4"/></svg></button>
  </footer>
</div>
</body>
</html>
```
FILE: styles.css
```css
* { box-sizing: border-box; }
body { margin: 0; background: #fff; color: #1b1b1f; font-family: "Noto Sans CJK KR", sans-serif; overflow: hidden; }
button { font: inherit; color: inherit; border: 0; padding: 0; background: none; display: flex; align-items: center; justify-content: center; }

/* drawing surface */
.canvas { position: absolute; inset: 0; width: 100%; height: 100%; font-family: Lato, "Noto Sans CJK KR", sans-serif; }
.canvas rect, .canvas path, .canvas ellipse, .canvas circle { fill: none; stroke: #666; stroke-width: 1; }
.canvas text { fill: #1e1e1e; }
.canvas .soft, .canvas .soft rect { stroke: #a0a0a0; }
.canvas .dark { stroke: #444; }
.canvas .bold { stroke: #1e1e1e; stroke-width: 2; stroke-linecap: round; }
.canvas .thick { stroke: #b8b8b8; stroke-width: 4; }
.canvas .arrow { marker-end: url(#tip); }
.canvas .arrow-green { stroke: #4ea64e; marker-end: url(#tip-green); }
.canvas .red, .canvas .red path { stroke: #dd7777; }
.canvas .red.arrow { marker-end: url(#tip-red); }
.canvas .green, .canvas .green path { stroke: #6dba6d; }
.canvas .blue { stroke: #5b8fd6; }
.canvas .brown { stroke: #d4b0a4; }
.canvas .flower { stroke: #d43c3c; stroke-width: 3; }
.s5, .s6, .s7, .s8, .s15, .s24, .light { font-weight: 300; }
.m { font-weight: 400; }
.b { font-weight: 700; }
.canvas .s7, .canvas .s6, .canvas .s5, .canvas .s7 text, .canvas .s6 text, .canvas .s5 text { fill: #444; }
.canvas .tr { fill: #d94848; }
.canvas .tg, .canvas .tg text { fill: #3c963c; }
.canvas .tb { fill: #3a72c8; }
.s5 { font-size: 5px; } .s6 { font-size: 6px; } .s7 { font-size: 7px; } .s8 { font-size: 8px; }
.s9 { font-size: 9px; } .s10 { font-size: 10px; } .s11 { font-size: 11px; } .s12 { font-size: 12px; }
.s13 { font-size: 13px; } .s14 { font-size: 14px; } .s15 { font-size: 15px; } .s16 { font-size: 16px; }
.s17 { font-size: 17px; } .s18 { font-size: 18px; } .s20 { font-size: 20px; } .s21 { font-size: 21px; }
.s23 { font-size: 23px; } .s24 { font-size: 24px; }

/* editor chrome over the canvas */
.ui { position: relative; min-height: 100vh; display: flex; flex-direction: column; justify-content: space-between; padding: 31px 29px 26px 32px; }
.top { display: grid; grid-template-columns: 1fr auto 1fr; align-items: start; }
.center, .right { display: flex; }
.center { gap: 24px; }
.right { justify-content: flex-end; gap: 24px; }
.icon { width: 36px; height: 36px; fill: none; stroke: currentColor; stroke-width: 1.500; stroke-linecap: round; stroke-linejoin: round; }
.icon[viewBox="0 0 20 20"] { stroke-width: 1.250; }
.icon.small { width: 32px; height: 32px; }
.btn { min-width: 72px; height: 72px; border-radius: 16px; background: #ececf4; }
.toolbar { display: flex; gap: 8px; padding: 8px; background: #fff; border-radius: 16px; box-shadow: 0 0 2px rgba(0,0,0,.3), 0 14px 28px rgba(0,0,0,.07); }
.tool { position: relative; width: 72px; height: 72px; border-radius: 16px; }
.tool.on { background: #e0dfff; color: #030064; }
.tool span { position: absolute; right: 6px; bottom: 8px; font-size: 18px; line-height: 24px; color: #b8b8b8; }
.sep { width: 2px; height: 48px; margin: 12px 8px; background: #f1f0ff; }
.laser { width: 66px; height: 66px; margin-top: 11px; background: #fff; border-radius: 16px; box-shadow: 0 0 2px rgba(0,0,0,.3), 0 14px 28px rgba(0,0,0,.07); }
.share { position: relative; background: #63b386; color: #fff; }
.badge { position: absolute; right: -8px; bottom: -8px; width: 30px; height: 30px; border-radius: 50%; background: #c3efbc; color: #2b8a3e; font-size: 18px; line-height: 30px; text-align: center; }
.library { gap: 16px; padding: 0 24px 0 20px; font-size: 26px; font-weight: 300; }
.library .icon { width: 32px; height: 32px; }
.bottom { display: flex; gap: 20px; align-items: center; }
.group { display: flex; border-radius: 16px; background: #ececf4; }
.percent { width: 120px; font-size: 24px; font-weight: 300; }
.shield { margin-left: auto; margin-right: 42px; }
.bottom .shield + .btn { margin-left: -20px; }
.shield svg { display: block; width: 32px; height: 38px; }
```
